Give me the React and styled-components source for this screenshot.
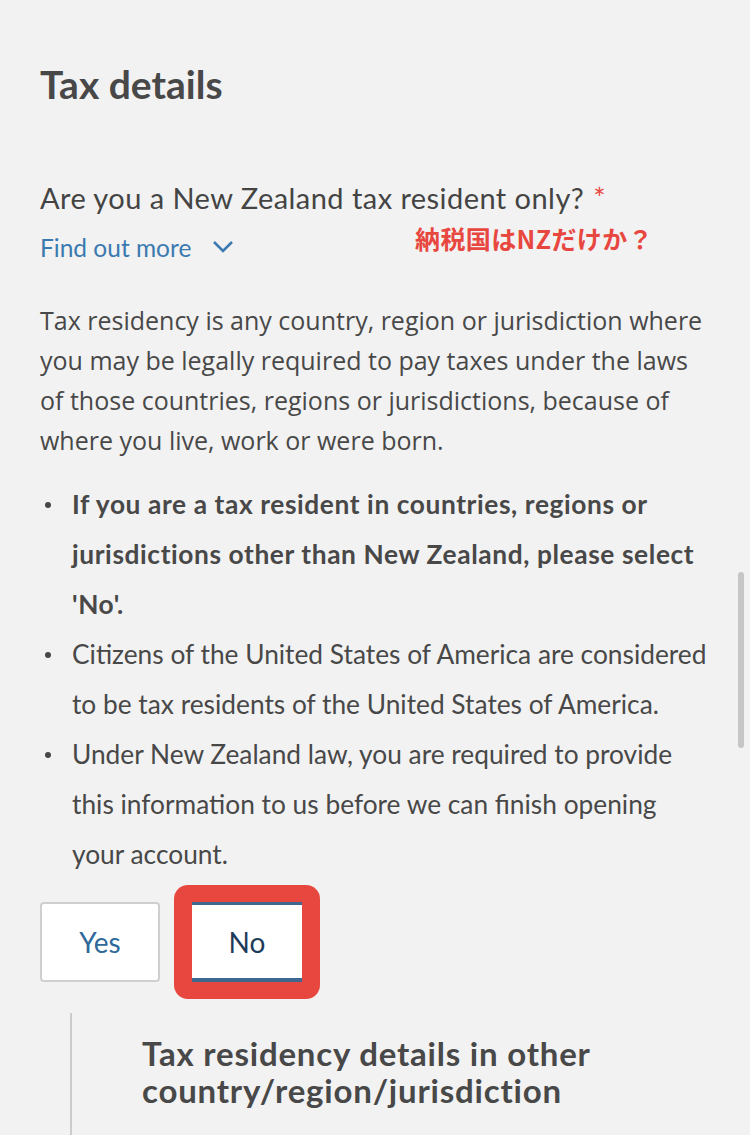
import React from "react";
import styled, { createGlobalStyle } from "styled-components";

const GlobalStyle = createGlobalStyle`
  html, body {
    margin: 0;
    padding: 0;
    background: #f2f2f2;
  }
  body {
    font-family: Lato, "Noto Sans", sans-serif;
    color: #444444;
  }
`;

const Page = styled.div`
  position: relative;
  width: 750px;
  height: 1135px;
  overflow: hidden;
  background: #f2f2f2;
  box-sizing: border-box;
  padding: 62px 40px 0 40px;
`;

const Title = styled.h1`
  font-size: 39px;
  font-weight: 700;
  color: #484848;
  margin: 0;
  line-height: 44px;
`;

const Question = styled.h2`
  font-size: 29px;
  font-weight: 400;
  color: #444444;
  margin: 74px 0 0 0;
  line-height: 36px;
  letter-spacing: 0.45px;
`;

const Required = styled.span`
  color: #e8473f;
  margin-left: 9px;
`;

const MoreRow = styled.div`
  position: relative;
  display: flex;
  align-items: center;
  margin-top: 16px;
  height: 30px;
`;

const MoreLink = styled.a`
  display: flex;
  align-items: center;
  gap: 21px;
  color: #3b7ab0;
  font-size: 24.5px;
  text-decoration: none;
  cursor: pointer;
`;

const Note = styled.span`
  position: absolute;
  left: 375px;
  top: -12px;
  font-family: "Noto Sans CJK JP", sans-serif;
  font-weight: 700;
  font-size: 25px;
  letter-spacing: 0.4px;
  color: #e8473f;
`;

const Intro = styled.p`
  font-family: "Open Sans", sans-serif;
  font-size: 25px;
  line-height: 40px;
  color: #484848;
  margin: 38px 0 0 0;
`;

const List = styled.ul`
  list-style: none;
  margin: 19px 0 0 0;
  padding: 0 0 0 32px;
`;

const Item = styled.li`
  position: relative;
  font-size: 26.3px;
  line-height: 50px;
  font-weight: ${({ $strong }) => ($strong ? 700 : 400)};
  letter-spacing: ${({ $strong }) => ($strong ? "0.6px" : "0")};
  color: #484848;
  &::before {
    content: "";
    position: absolute;
    left: -27px;
    top: 23px;
    width: 6px;
    height: 6px;
    border-radius: 50%;
    background: #484848;
  }
`;

const Choices = styled.div`
  display: flex;
  align-items: center;
  gap: 14px;
  margin-top: 6px;
`;

const Choice = styled.button`
  width: ${({ $w }) => $w}px;
  height: 80px;
  box-sizing: border-box;
  background: #ffffff;
  font-family: Lato, sans-serif;
  font-size: 28px;
  cursor: pointer;
  color: ${({ $selected }) => ($selected ? "#1f3b5a" : "#2f6a9a")};
  border: ${({ $selected }) => ($selected ? "0" : "2px solid #cfcfcf")};
  border-top: ${({ $selected }) => ($selected ? "3px solid #3e6890" : "")};
  border-bottom: ${({ $selected }) => ($selected ? "4px solid #3e6890" : "")};
  border-radius: ${({ $selected }) => ($selected ? "0" : "4px")};
`;

const Highlight = styled.span`
  display: inline-flex;
  padding: 17px 18px;
  background: #e8473f;
  border-radius: 14px;
`;

const Sub = styled.div`
  margin: 14px 0 0 30px;
  border-left: 2px solid #cccccc;
  padding: 22px 0 40px 70px;
`;

const SubTitle = styled.h3`
  margin: 0;
  font-size: 33px;
  font-weight: 700;
  line-height: 37px;
  letter-spacing: 0.8px;
  color: #484848;
`;

const Scrollbar = styled.div`
  position: absolute;
  right: 6px;
  top: 572px;
  width: 6px;
  height: 176px;
  border-radius: 3px;
  background: #c6c6c6;
`;

const Chevron = () => (
  <svg width="22" height="14" viewBox="0 0 22 14">
    <path d="M2 2 L11 11 L20 2" fill="none" stroke="#3b7ab0" strokeWidth="2.6" />
  </svg>
);

export default function App() {
  return (
    <>
      <GlobalStyle />
      <Page>
        <Title>Tax details</Title>
        <Question>
          Are you a New Zealand tax resident only?<Required>*</Required>
        </Question>
        <MoreRow>
          <MoreLink>
            Find out more <Chevron />
          </MoreLink>
          <Note>納税国はNZだけか？</Note>
        </MoreRow>
        <Intro>
          Tax residency is any country, region or jurisdiction where you may be
          legally required to pay taxes under the laws of those countries,
          regions or jurisdictions, because of where you live, work or were born.
        </Intro>
        <List>
          <Item $strong>
            If you are a tax resident in countries, regions or jurisdictions
            other than New Zealand, please select 'No'.
          </Item>
          <Item>
            Citizens of the United States of America are considered to be tax
            residents of the United States of America.
          </Item>
          <Item>
            Under New Zealand law, you are required to provide this information
            to us before we can finish opening your account.
          </Item>
        </List>
        <Choices>
          <Choice $w={120}>Yes</Choice>
          <Highlight>
            <Choice $w={110} $selected>
              No
            </Choice>
          </Highlight>
        </Choices>
        <Sub>
          <SubTitle>
            Tax residency details in other
            <br />
            country/region/jurisdiction
          </SubTitle>
        </Sub>
        <Scrollbar />
      </Page>
    </>
  );
}
